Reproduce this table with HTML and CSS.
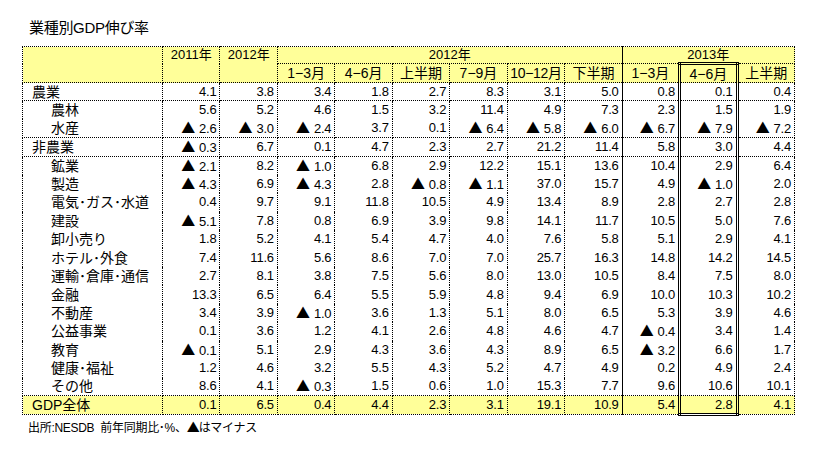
FILE: index.html
```html
<!DOCTYPE html>
<html lang="ja">
<head>
<meta charset="utf-8">
<title>業種別GDP伸び率</title>
<link rel="stylesheet" href="styles.css">
</head>
<body>
<div class="page">
  <h1 class="title">業種別GDP伸び率</h1>
  <table class="gdp">
    <colgroup>
      <col class="c-lab">
      <col class="c-num"><col class="c-num"><col class="c-num"><col class="c-num"><col class="c-num"><col class="c-num">
      <col class="c-num"><col class="c-num"><col class="c-num"><col class="c-num"><col class="c-num">
    </colgroup>
    <thead>
      <tr class="h1">
        <th rowspan="2" class="corner"></th>
        <th rowspan="2" class="year">2011年</th>
        <th rowspan="2" class="year">2012年</th>
        <th colspan="6" class="grp g2012">2012年</th>
        <th colspan="3" class="grp">2013年</th>
      </tr>
      <tr class="h2">
        <th>1−3月</th><th>4−6月</th><th>上半期</th><th>7−9月</th><th class="tight">10−12月</th><th class="end12">下半期</th>
        <th>1−3月</th><th class="hl">4−6月</th><th>上半期</th>
      </tr>
    </thead>
    <tbody>
      <tr class="sep"><td class="lab">農業</td><td>4.1</td><td>3.8</td><td>3.4</td><td>1.8</td><td>2.7</td><td>8.3</td><td>3.1</td><td>5.0</td><td>0.8</td><td>0.1</td><td>0.4</td></tr>
      <tr><td class="lab sub">農林</td><td>5.6</td><td>5.2</td><td>4.6</td><td>1.5</td><td>3.2</td><td>11.4</td><td>4.9</td><td>7.3</td><td>2.3</td><td>1.5</td><td>1.9</td></tr>
      <tr class="sep"><td class="lab sub">水産</td><td><span class="neg">▲</span>2.6</td><td><span class="neg">▲</span>3.0</td><td><span class="neg">▲</span>2.4</td><td>3.7</td><td>0.1</td><td><span class="neg">▲</span>6.4</td><td><span class="neg">▲</span>5.8</td><td><span class="neg">▲</span>6.0</td><td><span class="neg">▲</span>6.7</td><td><span class="neg">▲</span>7.9</td><td><span class="neg">▲</span>7.2</td></tr>
      <tr class="sep"><td class="lab">非農業</td><td><span class="neg">▲</span>0.3</td><td>6.7</td><td>0.1</td><td>4.7</td><td>2.3</td><td>2.7</td><td>21.2</td><td>11.4</td><td>5.8</td><td>3.0</td><td>4.4</td></tr>
      <tr><td class="lab sub">鉱業</td><td><span class="neg">▲</span>2.1</td><td>8.2</td><td><span class="neg">▲</span>1.0</td><td>6.8</td><td>2.9</td><td>12.2</td><td>15.1</td><td>13.6</td><td>10.4</td><td>2.9</td><td>6.4</td></tr>
      <tr><td class="lab sub">製造</td><td><span class="neg">▲</span>4.3</td><td>6.9</td><td><span class="neg">▲</span>4.3</td><td>2.8</td><td><span class="neg">▲</span>0.8</td><td><span class="neg">▲</span>1.1</td><td>37.0</td><td>15.7</td><td>4.9</td><td><span class="neg">▲</span>1.0</td><td>2.0</td></tr>
      <tr><td class="lab sub">電気･ガス･水道</td><td>0.4</td><td>9.7</td><td>9.1</td><td>11.8</td><td>10.5</td><td>4.9</td><td>13.4</td><td>8.9</td><td>2.8</td><td>2.7</td><td>2.8</td></tr>
      <tr><td class="lab sub">建設</td><td><span class="neg">▲</span>5.1</td><td>7.8</td><td>0.8</td><td>6.9</td><td>3.9</td><td>9.8</td><td>14.1</td><td>11.7</td><td>10.5</td><td>5.0</td><td>7.6</td></tr>
      <tr><td class="lab sub">卸小売り</td><td>1.8</td><td>5.2</td><td>4.1</td><td>5.4</td><td>4.7</td><td>4.0</td><td>7.6</td><td>5.8</td><td>5.1</td><td>2.9</td><td>4.1</td></tr>
      <tr><td class="lab sub">ホテル･外食</td><td>7.4</td><td>11.6</td><td>5.6</td><td>8.6</td><td>7.0</td><td>7.0</td><td>25.7</td><td>16.3</td><td>14.8</td><td>14.2</td><td>14.5</td></tr>
      <tr><td class="lab sub">運輸･倉庫･通信</td><td>2.7</td><td>8.1</td><td>3.8</td><td>7.5</td><td>5.6</td><td>8.0</td><td>13.0</td><td>10.5</td><td>8.4</td><td>7.5</td><td>8.0</td></tr>
      <tr><td class="lab sub">金融</td><td>13.3</td><td>6.5</td><td>6.4</td><td>5.5</td><td>5.9</td><td>4.8</td><td>9.4</td><td>6.9</td><td>10.0</td><td>10.3</td><td>10.2</td></tr>
      <tr><td class="lab sub">不動産</td><td>3.4</td><td>3.9</td><td><span class="neg">▲</span>1.0</td><td>3.6</td><td>1.3</td><td>5.1</td><td>8.0</td><td>6.5</td><td>5.3</td><td>3.9</td><td>4.6</td></tr>
      <tr><td class="lab sub">公益事業</td><td>0.1</td><td>3.6</td><td>1.2</td><td>4.1</td><td>2.6</td><td>4.8</td><td>4.6</td><td>4.7</td><td><span class="neg">▲</span>0.4</td><td>3.4</td><td>1.4</td></tr>
      <tr><td class="lab sub">教育</td><td><span class="neg">▲</span>0.1</td><td>5.1</td><td>2.9</td><td>4.3</td><td>3.6</td><td>4.3</td><td>8.9</td><td>6.5</td><td><span class="neg">▲</span>3.2</td><td>6.6</td><td>1.7</td></tr>
      <tr><td class="lab sub">健康･福祉</td><td>1.2</td><td>4.6</td><td>3.2</td><td>5.5</td><td>4.3</td><td>5.2</td><td>4.7</td><td>4.9</td><td>0.2</td><td>4.9</td><td>2.4</td></tr>
      <tr class="sep"><td class="lab sub">その他</td><td>8.6</td><td>4.1</td><td><span class="neg">▲</span>0.3</td><td>1.5</td><td>0.6</td><td>1.0</td><td>15.3</td><td>7.7</td><td>9.6</td><td>10.6</td><td>10.1</td></tr>
      <tr class="sep total"><td class="lab">GDP全体</td><td>0.1</td><td>6.5</td><td>0.4</td><td>4.4</td><td>2.3</td><td>3.1</td><td>19.1</td><td>10.9</td><td>5.4</td><td>2.8</td><td>4.1</td></tr>
    </tbody>
  </table>
  <p class="note">出所:NESDB&nbsp;&nbsp;前年同期比･%、<span class="tri">▲</span>はマイナス</p>
</div>
</body>
</html>
```

FILE: styles.css
```css
html, body {
  margin: 0;
  padding: 0;
  background: #ffffff;
}

body {
  font-family: "Liberation Sans", "Noto Sans CJK JP", sans-serif;
  color: #000000;
}

.page {
  padding: 0 0 0 22px;
}

.title {
  margin: 0;
  padding: 20px 0 0 7px;
  height: 26px;
  font-size: 15px;
  line-height: 16px;
  font-weight: normal;
  letter-spacing: -0.3px;
}

.gdp {
  border-collapse: collapse;
  table-layout: fixed;
  width: 773px;
  font-size: 13px;
}

.c-lab { width: 140px; }

.gdp th,
.gdp td {
  padding: 0;
  border-left: 1px dotted #000;
  border-right: 1px dotted #000;
  line-height: 14px;
  white-space: nowrap;
}

.gdp thead th {
  background: #ffff99;
  font-weight: normal;
  text-align: center;
  border-top: 1px dotted #000;
  border-bottom: 1px dotted #000;
  vertical-align: middle;
}

.gdp thead th.year {
  vertical-align: top;
  padding-top: 1px;
}

.gdp .h1 { height: 17px; }
.gdp .h2 { height: 19px; }

.gdp .h2 th { font-size: 14px; }
.gdp .h2 th.tight { letter-spacing: -0.3px; }

.gdp .g2012,
.gdp .end12 {
  border-right: 1px solid #000;
}

.gdp .h2 th.hl {
  border-top: 3px double #000;
  border-left: 3px double #000;
  border-right: 3px double #000;
}

.gdp tbody tr { height: 18.45px; }

.gdp tbody td {
  text-align: right;
  padding-right: 3px;
  vertical-align: middle;
  letter-spacing: -0.2px;
}

.gdp tbody td:nth-child(9) {
  border-right: 1px solid #000;
}

.gdp tbody td:nth-child(11) {
  border-left: 3px double #000;
  border-right: 3px double #000;
}

.gdp tbody tr.total td:nth-child(11) {
  border-bottom: 3px double #000;
}

.gdp tbody tr.sep td {
  border-bottom: 1px dotted #000;
}

.gdp td.lab {
  text-align: left;
  padding-left: 9px;
  font-size: 14px;
  letter-spacing: 0;
}

.gdp td.lab.sub {
  padding-left: 28px;
}

.gdp tr.total td {
  background: #ffff99;
}

.neg {
  font-family: "Noto Sans CJK JP", sans-serif;
  font-size: 14px;
  line-height: 14px;
  margin-right: 4px;
}

.note {
  margin: 4px 0 0 6px;
  font-size: 12px;
  line-height: 14px;
  letter-spacing: -0.3px;
}

.note .tri {
  font-family: "Noto Sans CJK JP", sans-serif;
  font-size: 13px;
  letter-spacing: -1px;
}
```
